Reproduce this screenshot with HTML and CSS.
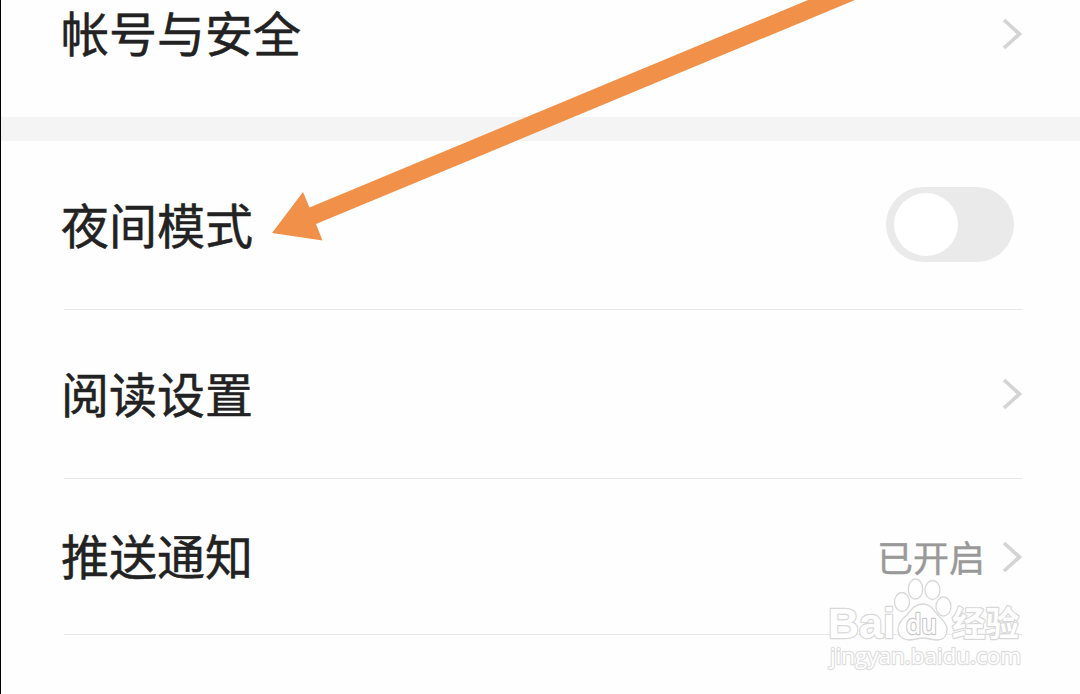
FILE: index.html
```html
<!DOCTYPE html>
<html lang="zh-CN">
<head>
<meta charset="utf-8">
<title>设置</title>
<link rel="stylesheet" href="styles.css">
</head>
<body>
<main class="screen">
  <section class="group group-account">
    <div class="row row-account">
      <span class="label">帐号与安全</span>
      <svg class="chevron" viewBox="0 0 20 32"><path d="M2 2 17.5 16 2 30"/></svg>
    </div>
  </section>
  <section class="group">
    <div class="row row-night">
      <span class="label">夜间模式</span>
      <span class="toggle"><span class="knob"></span></span>
    </div>
    <div class="row row-reading">
      <span class="label">阅读设置</span>
      <svg class="chevron" viewBox="0 0 20 32"><path d="M2 2 17.5 16 2 30"/></svg>
    </div>
    <div class="row row-push">
      <span class="label">推送通知</span>
      <span class="status">已开启</span>
      <svg class="chevron" viewBox="0 0 20 32"><path d="M2 2 17.5 16 2 30"/></svg>
    </div>
  </section>
  <svg class="overlay" viewBox="0 0 1080 694">
    <path class="arrow" d="M272 233 303 192 309.5 207.5 808 0H855L316 224 322.500 240.500Z"/>
    <g class="mark">
      <text class="mark-latin" x="828" y="638" textLength="67" lengthAdjust="spacingAndGlyphs">Bai</text>
      <ellipse cx="902" cy="602" rx="7.500" ry="9.500"/>
      <ellipse cx="915.500" cy="589" rx="7.200" ry="10"/>
      <ellipse cx="932.500" cy="590" rx="7.500" ry="9.500"/>
      <ellipse cx="943.500" cy="606.500" rx="7.500" ry="9.500"/>
      <path d="M923 604C915 604 911 610 907 615C902 619 898 623 898 629C898 636 903 640 909 640C914 640 918 638 923 638C928 638 932 640 937 640C943 640 947 636 947 629C947 623 941 619 937 614C933 609 930 604 923 604Z"/>
      <text class="mark-du" x="906" y="634" textLength="31" lengthAdjust="spacingAndGlyphs">du</text>
      <text class="mark-cjk" x="952" y="636" textLength="67" lengthAdjust="spacingAndGlyphs">经验</text>
      <text class="mark-url" x="830" y="664" textLength="191" lengthAdjust="spacingAndGlyphs">jingyan.baidu.com</text>
    </g>
  </svg>
</main>
</body>
</html>
```
FILE: styles.css
```css
* { box-sizing: border-box; }
body {
  margin: 0;
  background: #fefefe;
  font-family: "Noto Sans CJK SC", sans-serif;
}
.screen {
  position: relative;
  width: 1080px;
  height: 694px;
  overflow: hidden;
  border-left: 1px solid #000;
}
.group { padding: 0 58px 0 63px; }
.group-account {
  height: 141px;
  border-bottom: 24px solid #f4f4f4;
}
.row {
  display: flex;
  align-items: center;
  border-bottom: 1px solid #e8e8e8;
}
.row-account { height: 67px; border-bottom: 0; }
.row-night { height: 169px; }
.row-reading { height: 169px; }
.row-push { height: 156px; }
.label {
  flex: 1;
  margin-left: -3px;
  padding-bottom: 5px;
  color: #222;
  font-size: 48px;
  line-height: 60px;
  -webkit-text-stroke: 0.5px #222;
}
.status {
  margin-right: 17px;
  padding-bottom: 2px;
  color: #999;
  font-size: 36px;
  line-height: 44px;
  -webkit-text-stroke: 0.4px #999;
}
.row-account .label { padding-bottom: 6px; }
.chevron {
  width: 20px;
  height: 32px;
  fill: none;
  stroke: #d4d4d4;
  stroke-width: 3.7;
}
.toggle {
  display: flex;
  width: 128px;
  height: 75px;
  margin: 0 8px 2px 0;
  padding: 6px 8px;
  border-radius: 38px;
  background: #eaeaea;
}
.knob {
  width: 64px;
  height: 63px;
  border-radius: 50%;
  background: #fff;
}
.overlay {
  position: absolute;
  top: 0;
  left: -1px;
  width: 1080px;
  height: 694px;
}
.arrow { fill: #f19149; }
.mark {
  fill: #fff;
  stroke: #d8d8d8;
  stroke-width: 1.3;
  stroke-linejoin: round;
}
.mark text { paint-order: stroke; stroke-width: 2.4; }
.mark-latin {
  font: bold 43px "Liberation Sans", sans-serif;
}
.mark .mark-du {
  font: 600 27px "Open Sans", sans-serif;
  stroke: #c8c8c8;
}
.mark-cjk {
  font: bold 34px "Noto Sans CJK SC", sans-serif;
}
.mark .mark-url {
  font: 22px "Open Sans", sans-serif;
  stroke: #dedede;
}
```
